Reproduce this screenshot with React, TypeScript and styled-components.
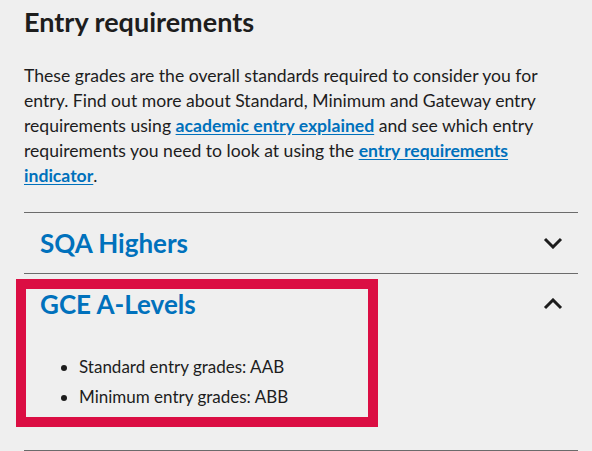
import { useState } from 'react'
import styled, { createGlobalStyle } from 'styled-components'

const GlobalStyle = createGlobalStyle`
  html, body {
    margin: 0;
    background: #efefef;
  }
  body {
    font-family: Lato, "Noto Sans", sans-serif;
    color: #1d1d1d;
  }
`

const Page = styled.div`
  padding: 4px 14px 0 24px;
`

const Heading = styled.h2`
  margin: 0;
  font-size: 27px;
  line-height: 36px;
  font-weight: 700;
  color: #1d1d1d;
`

const Intro = styled.p`
  margin: 23px 0 24px;
  font-size: 17.6px;
  line-height: 25px;
`

const Link = styled.a`
  color: #0071bc;
  font-weight: 700;
  text-decoration: underline;
  text-underline-offset: 2px;
`

const Accordion = styled.div`
  border-bottom: 1px solid #6b6b6b;
`

const Item = styled.section`
  position: relative;
  border-top: 1px solid #6b6b6b;
`

const Header = styled.button`
  display: flex;
  width: 100%;
  height: 60px;
  align-items: center;
  justify-content: space-between;
  padding: 0 15px 0 16px;
  border: 0;
  background: none;
  cursor: pointer;
  font-family: inherit;
  font-size: 26px;
  font-weight: 700;
  color: #0071bc;
  text-align: left;
`

const Chevron = styled.svg<{ $open: boolean }>`
  width: 20px;
  height: 12px;
  transform: ${(p) => (p.$open ? 'rotate(180deg)' : 'none')};
`

const Grades = styled.ul`
  margin: 18px 0 0;
  padding: 0 0 38px 55px;
  font-size: 17px;
  line-height: 30px;
`

const Highlight = styled.div`
  position: absolute;
  top: 5px;
  left: -8px;
  width: 362px;
  height: 148px;
  box-sizing: border-box;
  border: 10px solid #db0e43;
  pointer-events: none;
`

const items = [
  { title: 'SQA Highers', grades: ['Standard entry grades: AABB', 'Minimum entry grades: ABBB'] },
  { title: 'GCE A-Levels', grades: ['Standard entry grades: AAB', 'Minimum entry grades: ABB'] },
]

function App() {
  const [open, setOpen] = useState(1)
  return (
    <Page>
      <GlobalStyle />
      <Heading>Entry requirements</Heading>
      <Intro>
        These grades are the overall standards required to consider you for entry. Find out more
        about Standard, Minimum and Gateway entry requirements using{' '}
        <Link href="#">academic entry explained</Link> and see which entry requirements you need to
        look at using the <Link href="#">entry requirements indicator</Link>.
      </Intro>
      <Accordion>
        {items.map((item, i) => (
          <Item key={item.title}>
            <Header onClick={() => setOpen(open === i ? -1 : i)}>
              {item.title}
              <Chevron $open={open === i} viewBox="0 0 20 12">
                <polyline points="2,2 10,10 18,2" fill="none" stroke="#1d1d1d" strokeWidth="3" />
              </Chevron>
            </Header>
            {open === i && (
              <Grades>
                {item.grades.map((g) => (
                  <li key={g}>{g}</li>
                ))}
              </Grades>
            )}
            {i === 1 && <Highlight />}
          </Item>
        ))}
      </Accordion>
    </Page>
  )
}

export default App
